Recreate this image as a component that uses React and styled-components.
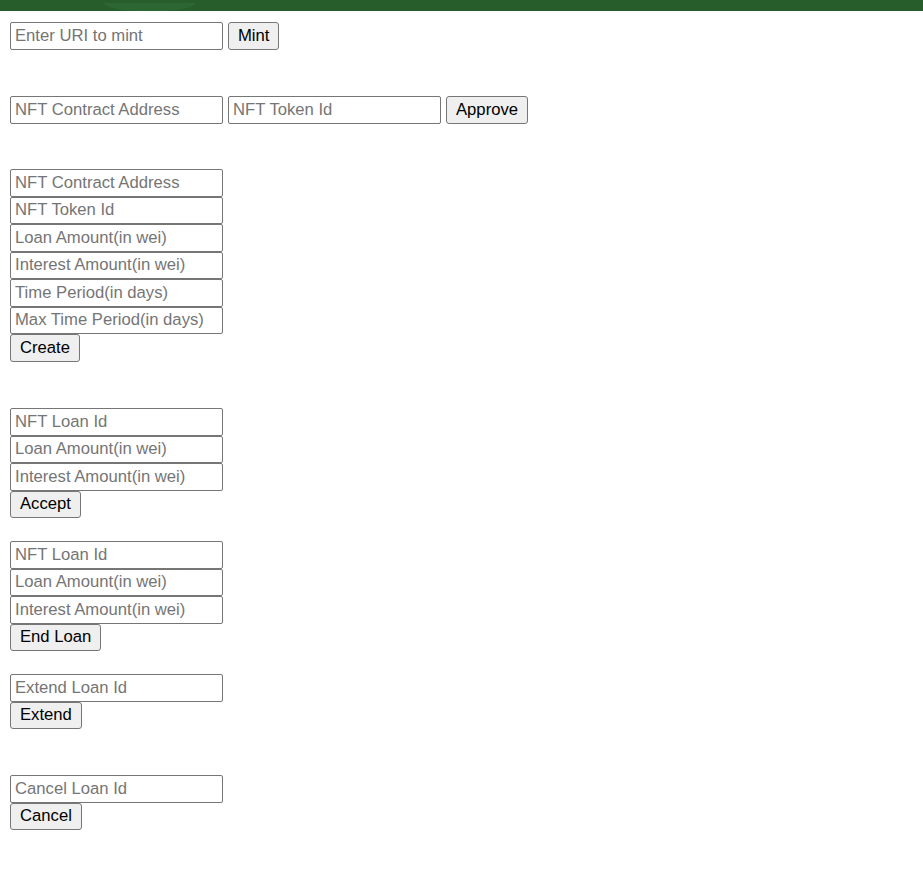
import React from 'react'
import styled, { createGlobalStyle } from 'styled-components'

const GlobalStyle = createGlobalStyle`
  html, body {
    margin: 0;
    padding: 0;
    background: #ffffff;
    font-family: "Liberation Sans", Arial, sans-serif;
  }
`

const TopBar = styled.div`
  height: 11px;
  background: #265d2b;
  display: flex;
  align-items: flex-end;
  padding-left: 104px;
`

const NavGlow = styled.div`
  width: 92px;
  height: 8px;
  background: #2c6631;
  border-radius: 0 0 40px 40px / 0 0 8px 8px;
`

const Main = styled.div`
  padding: 11px 10px 40px;
  display: flex;
  flex-direction: column;
  align-items: flex-start;
`

const Row = styled.div`
  display: flex;
  gap: 5px;
  margin-top: ${(p) => p.$space || 0}px;
`

const Stack = styled.div`
  display: flex;
  flex-direction: column;
  align-items: flex-start;
  margin-top: ${(p) => p.$space || 0}px;
`

const Field = styled.input`
  box-sizing: border-box;
  width: 213px;
  height: 27.5px;
  margin: 0;
  padding: 0 4px;
  border: 1px solid #767676;
  border-radius: 2px;
  background: #ffffff;
  font-family: "Liberation Sans", Arial, sans-serif;
  font-size: 16.67px;
  color: #000;
  outline: none;

  &::placeholder {
    color: #757575;
  }
`

const Btn = styled.button`
  box-sizing: border-box;
  height: 27.5px;
  margin: 0;
  padding: 0 9px;
  border: 1px solid #767676;
  border-radius: 3px;
  background: #efefef;
  font-family: "Liberation Sans", Arial, sans-serif;
  font-size: 16.67px;
  color: #000;
  cursor: pointer;
`

const sections = [
  { space: 45.5, fields: ['NFT Contract Address', 'NFT Token Id', 'Loan Amount(in wei)', 'Interest Amount(in wei)', 'Time Period(in days)', 'Max Time Period(in days)'], label: 'Create' },
  { space: 46.5, fields: ['NFT Loan Id', 'Loan Amount(in wei)', 'Interest Amount(in wei)'], label: 'Accept' },
  { space: 23, fields: ['NFT Loan Id', 'Loan Amount(in wei)', 'Interest Amount(in wei)'], label: 'End Loan' },
  { space: 23, fields: ['Extend Loan Id'], label: 'Extend' },
  { space: 46, fields: ['Cancel Loan Id'], label: 'Cancel' },
]

const App = () => {
  return (
    <>
      <GlobalStyle />
      <TopBar>
        <NavGlow />
      </TopBar>
      <Main>
        <Row>
          <Field placeholder="Enter URI to mint" />
          <Btn>Mint</Btn>
        </Row>

        <Row $space={46.5}>
          <Field placeholder="NFT Contract Address" />
          <Field placeholder="NFT Token Id" />
          <Btn>Approve</Btn>
        </Row>

        {sections.map((s) => (
          <Stack key={s.label} $space={s.space}>
            {s.fields.map((f) => (
              <Field key={f} placeholder={f} />
            ))}
            <Btn>{s.label}</Btn>
          </Stack>
        ))}
      </Main>
    </>
  )
}

export default App
